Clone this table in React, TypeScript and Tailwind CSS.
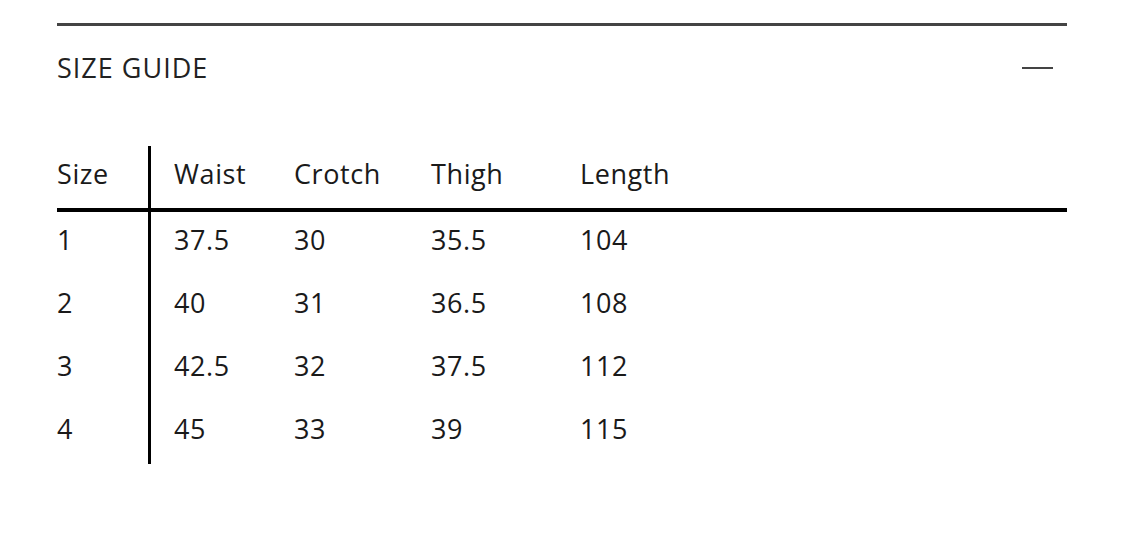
const headers = ['Waist', 'Crotch', 'Thigh', 'Length']

const rows = [
  { size: '1', values: ['37.5', '30', '35.5', '104'] },
  { size: '2', values: ['40', '31', '36.5', '108'] },
  { size: '3', values: ['42.5', '32', '37.5', '112'] },
  { size: '4', values: ['45', '33', '39', '115'] },
]

const colWidths = ['w-[120px]', 'w-[137px]', 'w-[149px]', 'flex-1']

export default function App() {
  return (
    <div className="min-h-screen bg-white font-['Open_Sans',sans-serif] text-[#1a1a1a]">
      <div className="mx-[57px] w-[1010px] pt-[23px]">
        {/* accordion header */}
        <div className="border-t-[3px] border-[#444]">
          <div className="flex h-[88px] items-center justify-between">
            <h2 className="-translate-y-[2px] text-[27px] font-normal tracking-[1px] text-[#222]">SIZE GUIDE</h2>
            <div className="mr-[14px] h-[2.5px] w-[31px] -translate-y-[2px] bg-[#444]" />
          </div>
        </div>

        {/* size table */}
        <div className="mt-[32px] flex w-full tracking-[0.6px]">
          <div className="w-[91px] shrink-0">
            <div className="flex h-[66px] items-center border-b-[4px] border-black pb-[5px] text-[27px]">
              Size
            </div>
            {rows.map((r) => (
              <div key={r.size} className="flex h-[63px] items-center pb-[6px] text-[27px]">
                {r.size}
              </div>
            ))}
          </div>
          <div className="w-[3px] shrink-0 bg-black" />
          <div className="flex-1">
            <div className="flex h-[66px] items-center border-b-[4px] border-black pb-[5px] pl-[23px] text-[27px]">
              {headers.map((h, i) => (
                <div key={h} className={colWidths[i]}>
                  {h}
                </div>
              ))}
            </div>
            {rows.map((r) => (
              <div key={r.size} className="flex h-[63px] items-center pb-[6px] pl-[23px] text-[27px]">
                {r.values.map((v, i) => (
                  <div key={i} className={colWidths[i]}>
                    {v}
                  </div>
                ))}
              </div>
            ))}
          </div>
        </div>
      </div>
    </div>
  )
}
